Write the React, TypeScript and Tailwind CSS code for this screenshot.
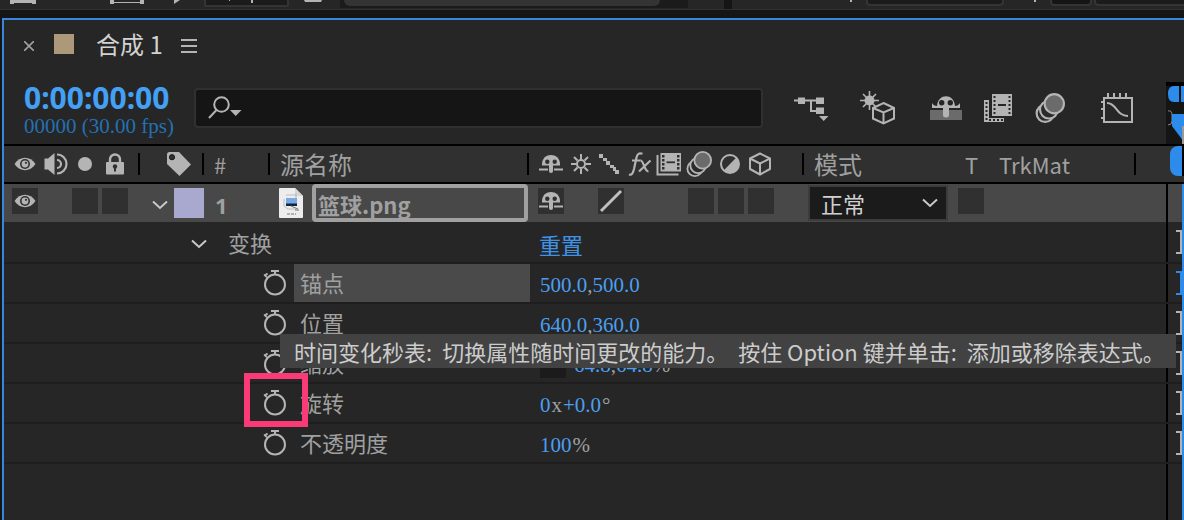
import React from 'react';

type P = { className?: string };

const C = '#b4b4b4';

const Eye = ({ className = '' }: P) => (
  <svg className={className} width="22" height="16" viewBox="0 0 22 16" aria-hidden="true">
    <path d="M0.500 8 C6 -0.300 16 -0.300 21.500 8 C16 16.300 6 16.300 0.500 8Z" fill={C} />
    <circle cx="11" cy="8" r="5" fill="#303030" />
    <circle cx="11" cy="8" r="3.4" fill={C} />
    <circle cx="12" cy="6.8" r="1.1" fill="#303030" />
  </svg>
);

const Speaker = () => (
  <svg width="24" height="24" viewBox="0 0 24 24" aria-hidden="true">
    <path d="M0.5 6.5H4L10.5 1V23L4 17.5H0.5Z" fill={C} />
    <path d="M13 8 A4 4 0 0 1 13 16" fill="none" stroke={C} strokeWidth="2.2" />
    <path d="M13 2.5 A9.5 9.5 0 0 1 13 21.5" fill="none" stroke={C} strokeWidth="2.2" />
  </svg>
);

const Dot = () => (
  <svg width="16" height="16" viewBox="0 0 16 16" aria-hidden="true">
    <circle cx="8" cy="8" r="7" fill={C} />
  </svg>
);

const Lock = () => (
  <svg width="20" height="22" viewBox="0 0 20 22" aria-hidden="true">
    <path d="M5 10V6.5a5 5 0 0 1 10 0V10" fill="none" stroke={C} strokeWidth="2.4" />
    <rect x="1" y="9" width="18" height="12.5" rx="1" fill={C} />
    <circle cx="10" cy="13.5" r="2.2" fill="#303030" />
    <path d="M9 14h2v4.5H9Z" fill="#303030" />
  </svg>
);

const Tag = () => (
  <svg width="26" height="26" viewBox="0 0 26 26" aria-hidden="true">
    <path d="M1 3.5 Q1 1 3.5 1H13L25 13.5 13.5 25 1 13Z" fill={C} />
    <circle cx="6" cy="6.2" r="2.6" fill="#303030" stroke="#1a1a1a" />
  </svg>
);

const Shy = () => (
  <svg width="26" height="20" viewBox="0 0 26 20" aria-hidden="true">
    <path d="M4 11.5C3 -2.5 23 -2.5 22 11.5Z" fill={C} />
    <circle cx="9.3" cy="7.7" r="2.2" fill="#303030" />
    <circle cx="16.7" cy="7.7" r="2.2" fill="#303030" />
    <path d="M11 10H15V17a2 2 0 0 1-4 0Z" fill={C} />
    <path d="M1 15.5H10M16 15.5H25" stroke={C} strokeWidth="2" />
  </svg>
);

const Sun = () => (
  <svg width="22" height="22" viewBox="0 0 22 22" aria-hidden="true">
    <circle cx="11" cy="11" r="4" fill="none" stroke={C} strokeWidth="2" />
    <path d="M11 1V6M11 16V21M1 11H6M16 11H21M4 4L7.5 7.5M14.5 14.5L18 18M18 4L14.5 7.5M7.5 14.5L4 18" stroke={C} strokeWidth="2" />
  </svg>
);

const Stairs = () => (
  <svg width="22" height="22" viewBox="0 0 22 22" aria-hidden="true">
    <path d="M1 1H5V5H1ZM5 5H9V8H5ZM8 8H12V12H8ZM12 12H16V15H12ZM17 17H21V21H17ZM15 14H18V18H15Z" fill={C} />
  </svg>
);

const FunctionIcon = () => (
  <svg width="24" height="26" viewBox="0 0 24 26" fill="none" stroke={C} strokeWidth="2.2" aria-hidden="true">
    <path d="M1 23.500C4 24.500 5 22 6 18L8.500 6.500C9.300 2.800 11 1.800 14.500 2.800M4 9.500H12.500" />
    <path d="M12.500 9.500C16 9.500 16 20.500 20.500 20.500M22.500 9.500L11 20.500" />
  </svg>
);

const Film = () => (
  <svg width="26" height="24" viewBox="0 0 26 24" aria-hidden="true">
    <path d="M1.500 3V22.500H22.500" fill="none" stroke={C} strokeWidth="2" />
    <rect x="4.500" y="1" width="20.500" height="18.500" fill={C} />
    <path d="M6 3H8.500V5.500H6ZM6 7H8.500V9.500H6ZM6 11H8.500V13.500H6ZM6 15H8.500V17.500H6ZM21 3H23.500V5.500H21ZM21 7H23.500V9.500H21ZM21 11H23.500V13.500H21ZM21 15H23.500V17.500H21Z" fill="#303030" />
    <path d="M10.500 10.300H19" stroke="#303030" strokeWidth="1.800" />
  </svg>
);

const Blur = ({ size = 26 }: { size?: number }) => (
  <svg width={size} height={size} viewBox="0 0 28 28" aria-hidden="true">
    <g fill="#2b2b2b" stroke={C} strokeWidth="2">
      <circle cx="9.5" cy="19" r="8" />
      <circle cx="13" cy="15.500" r="8.300" />
      <circle cx="18" cy="10" r="9" fill="#6b6b6b" />
    </g>
  </svg>
);

const Adjust = () => (
  <svg width="22" height="22" viewBox="0 0 22 22" aria-hidden="true">
    <circle cx="11" cy="11" r="9" fill="none" stroke={C} strokeWidth="2" />
    <path d="M17.400 4.600 A9 9 0 0 1 4.600 17.400Z" fill={C} />
  </svg>
);

const Cube = () => (
  <svg width="24" height="24" viewBox="0 0 24 24" fill="none" stroke={C} strokeWidth="2" strokeLinejoin="round" aria-hidden="true">
    <path d="M12 1.500L22 6.500V17L12 22.500L2 17V6.500Z" />
    <path d="M2 6.500L12 11.500L22 6.500M12 11.500V22.500" />
  </svg>
);

const Flow = () => (
  <svg width="36" height="28" viewBox="0 0 36 28" aria-hidden="true">
    <path d="M1 6.500H23M18 6.500V17H24" fill="none" stroke={C} strokeWidth="2" />
    <path d="M5 3.500H12V10H5ZM23 3.500H31V10H23ZM23 13.500H31V20H23ZM26 22H35.500L30.700 27Z" fill={C} />
  </svg>
);

const Draft3D = () => (
  <svg width="36" height="34" viewBox="0 0 36 34" aria-hidden="true">
    <circle cx="9.500" cy="9.500" r="5" fill={C} />
    <path d="M9.500 0V19M0 9.500H19M3 3L16 16M16 3L3 16" stroke={C} strokeWidth="1.600" />
    <path d="M23.500 12L34 17V27.500L23.500 32.500L13 27.500V17Z" fill="#262626" stroke={C} strokeWidth="2" />
    <path d="M13 17L23.500 21.500L34 17M23.500 21.500V32.500" fill="none" stroke={C} strokeWidth="2" />
  </svg>
);

const HideShy = () => (
  <svg width="34" height="26" viewBox="0 0 34 26" aria-hidden="true">
    <rect x="1" y="15" width="32" height="10" fill="#6b6b6b" />
    <path d="M3 8V13H31V8C30 10 28 11 26 11C25 -2 9 -2 8 11C6 11 4 10 3 8Z" fill={C} />
    <circle cx="12.700" cy="7.700" r="2.700" fill="#262626" />
    <circle cx="21.300" cy="7.700" r="2.700" fill="#262626" />
    <path d="M14 11H20V20a3 2.500 0 0 1-6 0Z" fill={C} />
  </svg>
);

const FrameBlend = () => (
  <svg width="30" height="30" viewBox="0 0 30 30" aria-hidden="true">
    <path d="M1 7H6V25H21V29H1Z" fill={C} />
    <path d="M3.500 9V28M6 27H20" stroke="#262626" strokeWidth="2" strokeDasharray="2 2" />
    <rect x="9" y="1" width="20" height="22" fill={C} />
    <path d="M11.500 3V22M26.500 3V22" stroke="#262626" strokeWidth="2" strokeDasharray="2 2" />
    <path d="M15 12H23" stroke="#262626" strokeWidth="2" />
  </svg>
);

const Graph = () => (
  <svg width="34" height="32" viewBox="0 0 34 32" fill="none" stroke={C} strokeWidth="2" aria-hidden="true">
    <rect x="4" y="6" width="28" height="24" />
    <path d="M8 1V6M14 1V6M20 1V6M26 1V6M1 10H4M1 17H4M1 26H4" />
    <path d="M7 11C17 11 16 24 28 24" />
  </svg>
);

const Chevron = ({ className = '' }: P) => (
  <svg className={className} width="16" height="10" viewBox="0 0 16 10" fill="none" stroke="#c8c8c8" strokeWidth="2" aria-hidden="true">
    <path d="M1 1.500L8 8L15 1.500" />
  </svg>
);

const Stopwatch = () => (
  <svg width="24" height="28" viewBox="0 0 24 28" fill="none" stroke={C} strokeWidth="2" aria-hidden="true">
    <circle cx="12" cy="15.500" r="10" />
    <path d="M8 2H16M12 2V5.500M1.500 7L4.500 4.500" />
    <path d="M1 5.500L4 8.500" strokeWidth="1.500" />
  </svg>
);

const PngFile = () => (
  <svg width="24" height="30" viewBox="0 0 24 30" aria-hidden="true">
    <path d="M1 0H16L24 8V29Q24 30 23 30H1Q0 30 0 29V1Q0 0 1 0Z" fill="#ededed" />
    <path d="M16 0V8H24Z" fill="#d6d6d6" />
    <path d="M7 7H17V10M5 11V18L9 21H17M17 5V9" fill="none" stroke="#bdbdbd" />
    <rect x="7" y="10" width="11" height="7" fill="#78a9e6" />
    <path d="M7 15.500H18V18H7Z" fill="#15243d" />
    <path d="M12 18L19 21M16 22H20" stroke="#777" />
    <path d="M8 26H17" stroke="#b0b0b0" strokeDasharray="3 1" strokeWidth="2" />
  </svg>
);

const Divider = () => <span className="h-[22px] w-[2px] shrink-0 bg-black" />;

const Box = ({ children }: { children?: React.ReactNode }) => (
  <span className="flex size-[26px] shrink-0 items-center justify-center bg-[#303030]">{children}</span>
);

const SideCell = ({ blue = false }: { blue?: boolean }) => (
  <span className="flex h-full w-[14px] shrink-0 items-center justify-end">
    <svg width="6" height="24" viewBox="0 0 6 24" fill="none" stroke={blue ? '#2d8ceb' : '#b4b4b4'} strokeWidth="2" aria-hidden="true">
      <path d="M0 1H5V23H0" />
    </svg>
  </span>
);

const values = 'border-0 bg-transparent p-0 text-[#4a9ff0]';

type Row = { name: string; value: React.ReactNode; selected?: boolean; marked?: boolean; linked?: boolean };

const rows: Row[] = [
  { name: '锚点', selected: true, value: <><button className={values}>500.0</button><span>,</span><button className={values}>500.0</button></> },
  { name: '位置', value: <><button className={values}>640.0</button><span>,</span><button className={values}>360.0</button></> },
  { name: '缩放', linked: true, value: <><button className={values}>64.8</button><span>,</span><button className={values}>64.8</button><span>%</span></> },
  { name: '旋转', marked: true, value: <><button className={values}>0</button><span className="px-px">x</span><button className={values}>+0.0</button><span className="pl-px">°</span></> },
  { name: '不透明度', value: <><button className={values}>100</button><span className="pl-px">%</span></> },
];

export default function App() {
  return (
    <div className="flex min-h-screen w-full flex-col overflow-hidden bg-[#151515] font-['Noto_Sans_CJK_SC',sans-serif] text-[#a0a0a0]">
      <header className="flex h-[10px] shrink-0 items-start overflow-hidden border-b border-[#303030] bg-[#262626]">
        <svg className="ml-[10px] shrink-0" width="314" height="8" viewBox="0 0 314 8" aria-hidden="true">
          <path d="M0 0H26V4H22V2H4V4H0ZM4 0H22V3H4Z" fill={C} />
          <path d="M100 0H104V2H130V0H134V4H130V3H104V4H100Z" fill={C} />
          <path d="M164 0H170L164 4Z" fill={C} />
          <path d="M195 0V5Q195 6 197 6H276Q278 6 278 5V0" fill="#1b1b1b" stroke="#343434" strokeWidth="2" />
          <path d="M219 0H220M242 0V3" stroke={C} strokeWidth="2" />
          <path d="M294 0H312L311 2H295Z" fill={C} />
        </svg>
        <div className="ml-4 flex h-2 w-[348px] shrink-0 bg-[#1b1b1b] pl-1">
          <div className="h-[6px] w-[316px] rounded-b-lg bg-[#343434]" />
        </div>
        <div className="ml-9 h-[10px] w-2 shrink-0 bg-[#151515]" />
        <div className="flex grow">
          <span className="ml-[118px] h-[2px] w-[2px] bg-[#b4b4b4]" />
          <span className="ml-[14px] h-[6px] w-[138px] rounded-b border-x-2 border-b-2 border-[#343434] bg-[#1b1b1b]" />
          <span className="ml-[30px] h-[2px] w-[2px] bg-[#b4b4b4]" />
          <span className="ml-[14px] h-[6px] w-[42px] rounded-b border-x-2 border-b-2 border-[#343434] bg-[#151515]" />
          <span className="ml-[2px] h-[6px] grow rounded-bl border-b-2 border-l-2 border-[#343434] bg-[#1b1b1b]" />
        </div>
      </header>

      <main className="mt-2 ml-[2px] flex grow flex-col border-t-2 border-l-2 border-[#3b86dd] bg-[#262626]">
        <div className="flex h-[52px] shrink-0 items-center pl-5">
          <button aria-label="关闭" className="flex h-5 w-[10px] items-center">
            <svg width="10" height="10" viewBox="0 0 10 10" stroke="#a0a0a0" strokeWidth="1.600"><path d="M0 0L10 10M10 0L0 10" /></svg>
          </button>
          <span className="mb-1 ml-5 size-5 bg-[#ab997a]" />
          <h1 className="mb-1 ml-[22px] text-2xl leading-8 text-[#d2d2d2]">合成 1</h1>
          <button aria-label="面板菜单" className="ml-[18px] flex w-4 flex-col gap-1">
            <span className="h-[2px] w-4 bg-[#b4b4b4]" />
            <span className="h-[2px] w-4 bg-[#b4b4b4]" />
            <span className="h-[2px] w-4 bg-[#b4b4b4]" />
          </button>
        </div>

        <div className="flex h-[72px] shrink-0">
          <div className="flex min-w-0 grow items-start pr-8 pl-5">
            <div className="flex w-[170px] shrink-0 flex-col pt-2">
              <button className="text-left font-['Noto_Sans',sans-serif] text-[30px] leading-9 font-bold text-[#43a0f4]">0:00:00:00</button>
              <span className="font-['Liberation_Serif',serif] text-[21px] leading-5 whitespace-nowrap text-[#2470b3]">00000 (30.00 fps)</span>
            </div>
            <label className="mt-4 flex h-10 w-[570px] shrink items-center rounded border-2 border-[#303030] bg-[#151515] pl-3">
              <svg width="34" height="24" viewBox="0 0 34 24" fill="none" stroke={C} strokeWidth="2" aria-hidden="true">
                <circle cx="13.500" cy="8.500" r="7.300" />
                <path d="M8.500 14L1 22" />
                <path d="M22 14H33.500L27.700 20Z" fill={C} stroke="none" />
              </svg>
              <input aria-label="搜索" className="min-w-0 grow bg-transparent px-2 text-lg outline-none" />
            </label>
            <div className="flex h-[72px] shrink-0 items-center pl-[30px]">
              <button aria-label="合成微型流程图" className="w-[67px]"><Flow /></button>
              <button aria-label="草图 3D" className="w-[69px]"><Draft3D /></button>
              <button aria-label="隐藏消隐图层" className="w-[54px]"><HideShy /></button>
              <button aria-label="帧混合" className="w-[52px]"><FrameBlend /></button>
              <button aria-label="运动模糊" className="w-[65px]"><Blur size={30} /></button>
              <button aria-label="图表编辑器"><Graph /></button>
            </div>
          </div>
          <svg className="mt-[10px] shrink-0" width="18" height="62" viewBox="0 0 18 62" aria-hidden="true">
            <path d="M0 0H18V62H0Z" fill="#151515" />
            <path d="M0 0H18V4H0Z" fill="#000" />
            <path d="M13 4V20H8Q2 20 2 12Q2 4 8 4ZM15 4H18V20H15Z" fill="#2d8ceb" />
            <path d="M2 29Q6 28 6 33V39Q6 43 2 43" fill="none" stroke="#888" />
            <path d="M6 32H18V60L6 44Z" fill="#2d8ceb" />
            <path d="M17 44V62" stroke="#999" strokeWidth="2" />
          </svg>
        </div>

        <div className="flex h-10 shrink-0 border-y-2 border-black bg-[#303030]">
          <div className="flex min-w-0 grow items-center">
            <div className="flex w-[134px] shrink-0 items-center pl-[10px]">
              <Eye /><span className="ml-2"><Speaker /></span><span className="ml-[9px]"><Dot /></span><span className="ml-3"><Lock /></span>
            </div>
            <Divider />
            <span className="flex w-[62px] justify-center pl-4"><Tag /></span>
            <Divider />
            <span className="w-[64px] shrink-0 pl-[10px] text-[22px] leading-8">#</span>
            <Divider />
            <span className="w-[257px] shrink-0 pl-[10px] text-2xl leading-8">源名称</span>
            <Divider />
            <div className="flex w-[273px] shrink-0 items-center pl-[9px]">
              <span className="w-[32px]"><Shy /></span>
              <span className="w-[28px]"><Sun /></span>
              <span className="w-[30px]"><Stairs /></span>
              <span className="w-[28px]"><FunctionIcon /></span>
              <span className="w-[30px]"><Film /></span>
              <span className="w-[33px]"><Blur /></span>
              <span className="w-[29px]"><Adjust /></span>
              <Cube />
            </div>
            <Divider />
            <span className="w-[161px] shrink-0 pl-[10px] text-2xl leading-8">模式</span>
            <span className="w-[34px] shrink-0 text-[22px] leading-8">T</span>
            <span className="w-[135px] shrink-0 text-[22px] leading-8">TrkMat</span>
            <Divider />
          </div>
          <span className="mb-1 h-[30px] w-[14px] shrink-0 rounded-l-lg border-r-2 border-black bg-[#2d8ceb]" />
        </div>

        <section className="relative flex grow flex-col border-r-2 border-[#2d8ceb]">
          <div className="flex h-[38px] shrink-0 bg-[#484848]">
            <div className="flex min-w-0 grow items-center border-r-2 border-black">
              <button aria-label="可见" className="mb-1 ml-2"><Box><Eye /></Box></button>
              <span className="mb-1 ml-[34px] flex gap-1"><Box /><Box /></span>
              <button aria-label="折叠图层" className="mt-1 ml-6"><Chevron /></button>
              <span className="ml-[6px] size-[30px] shrink-0 bg-[#a9a9cf]" />
              <span className="mt-1 w-[75px] shrink-0 pl-[11px] font-['Noto_Sans',sans-serif] text-[22px] leading-8 font-bold">1</span>
              <PngFile />
              <input aria-label="图层名称" defaultValue="篮球.png" className="ml-[9px] h-[38px] w-[216px] shrink-0 rounded-sm border-4 border-[#a0a0a0] bg-transparent pt-px pl-[2px] text-[22px] font-bold text-[#a0a0a0] outline-none" />
              <span className="mb-1 ml-[10px] flex"><Box><Shy /></Box></span>
              <span className="mb-1 ml-[34px] flex">
                <Box>
                  <svg width="24" height="24" viewBox="0 0 24 24" stroke="#c0c0c0" strokeWidth="3" aria-hidden="true"><path d="M2 22L22 2" /></svg>
                </Box>
              </span>
              <span className="mb-1 ml-16 flex gap-1"><Box /><Box /><Box /></span>
              <span className="relative ml-[34px] flex items-center">
                <select aria-label="模式" className="h-[36px] w-[140px] appearance-none border-2 border-[#3c3c3c] bg-[#1b1b1b] pl-[11px] text-[22px] leading-7 text-[#d0d0d0]">
                  <option>正常</option>
                </select>
                <Chevron className="pointer-events-none absolute right-[10px]" />
              </span>
              <span className="mb-1 ml-[10px] flex"><Box /></span>
            </div>
            <span className="w-[14px] shrink-0" />
          </div>

          <div className="flex h-[42px] shrink-0 border-b-2 border-[#1e1e1e]">
            <div className="flex grow items-center border-r-2 border-black pl-[187px]">
              <button aria-label="折叠变换" className="pt-1"><Chevron /></button>
              <span className="ml-[21px] w-[311px] text-[22px] leading-8">变换</span>
              <button className="pt-1 text-[22px] leading-8 text-[#3f93e6]">重置</button>
            </div>
            <SideCell />
          </div>

          {rows.map((row) => (
            <div key={row.name} className="flex h-10 shrink-0 border-b-2 border-[#1e1e1e]">
              <div className="flex grow items-center border-r-2 border-black pl-[259px]">
                <span className="relative flex">
                  <button aria-label={`时间变化秒表 ${row.name}`}><Stopwatch /></button>
                  {row.marked && <span className="pointer-events-none absolute -top-4 -left-[19px] z-20 h-[54px] w-16 border-6 border-[#fb3b78]" />}
                </span>
                <span className={`ml-[7px] h-full w-[236px] shrink-0 pl-[6px] text-[22px] leading-9 ${row.selected ? 'bg-[#4a4a4a]' : ''}`}>{row.name}</span>
                <div className="flex items-center pt-1 pl-[10px] font-['Liberation_Serif',serif] text-[21px] leading-7">
                  {row.linked && <span className="mr-2 size-[26px] bg-[#1b1b1b]" />}
                  {row.value}
                </div>
              </div>
              <SideCell blue={row.selected} />
            </div>
          ))}

          <div className="flex grow">
            <span className="grow border-r-2 border-black" />
            <span className="w-[14px]" />
          </div>

          <div role="tooltip" className="absolute top-[150px] right-[6px] z-10 flex h-[34px] w-[896px] items-center gap-[10px] bg-[#424242] pl-[14px] text-[22px] leading-8 whitespace-nowrap text-[#cccccc]">
            <span>时间变化秒表:</span>
            <span>切换属性随时间更改的能力。</span>
            <span>按住 Option 键并单击:</span>
            <span>添加或移除表达式。</span>
          </div>
        </section>
      </main>
    </div>
  );
}
